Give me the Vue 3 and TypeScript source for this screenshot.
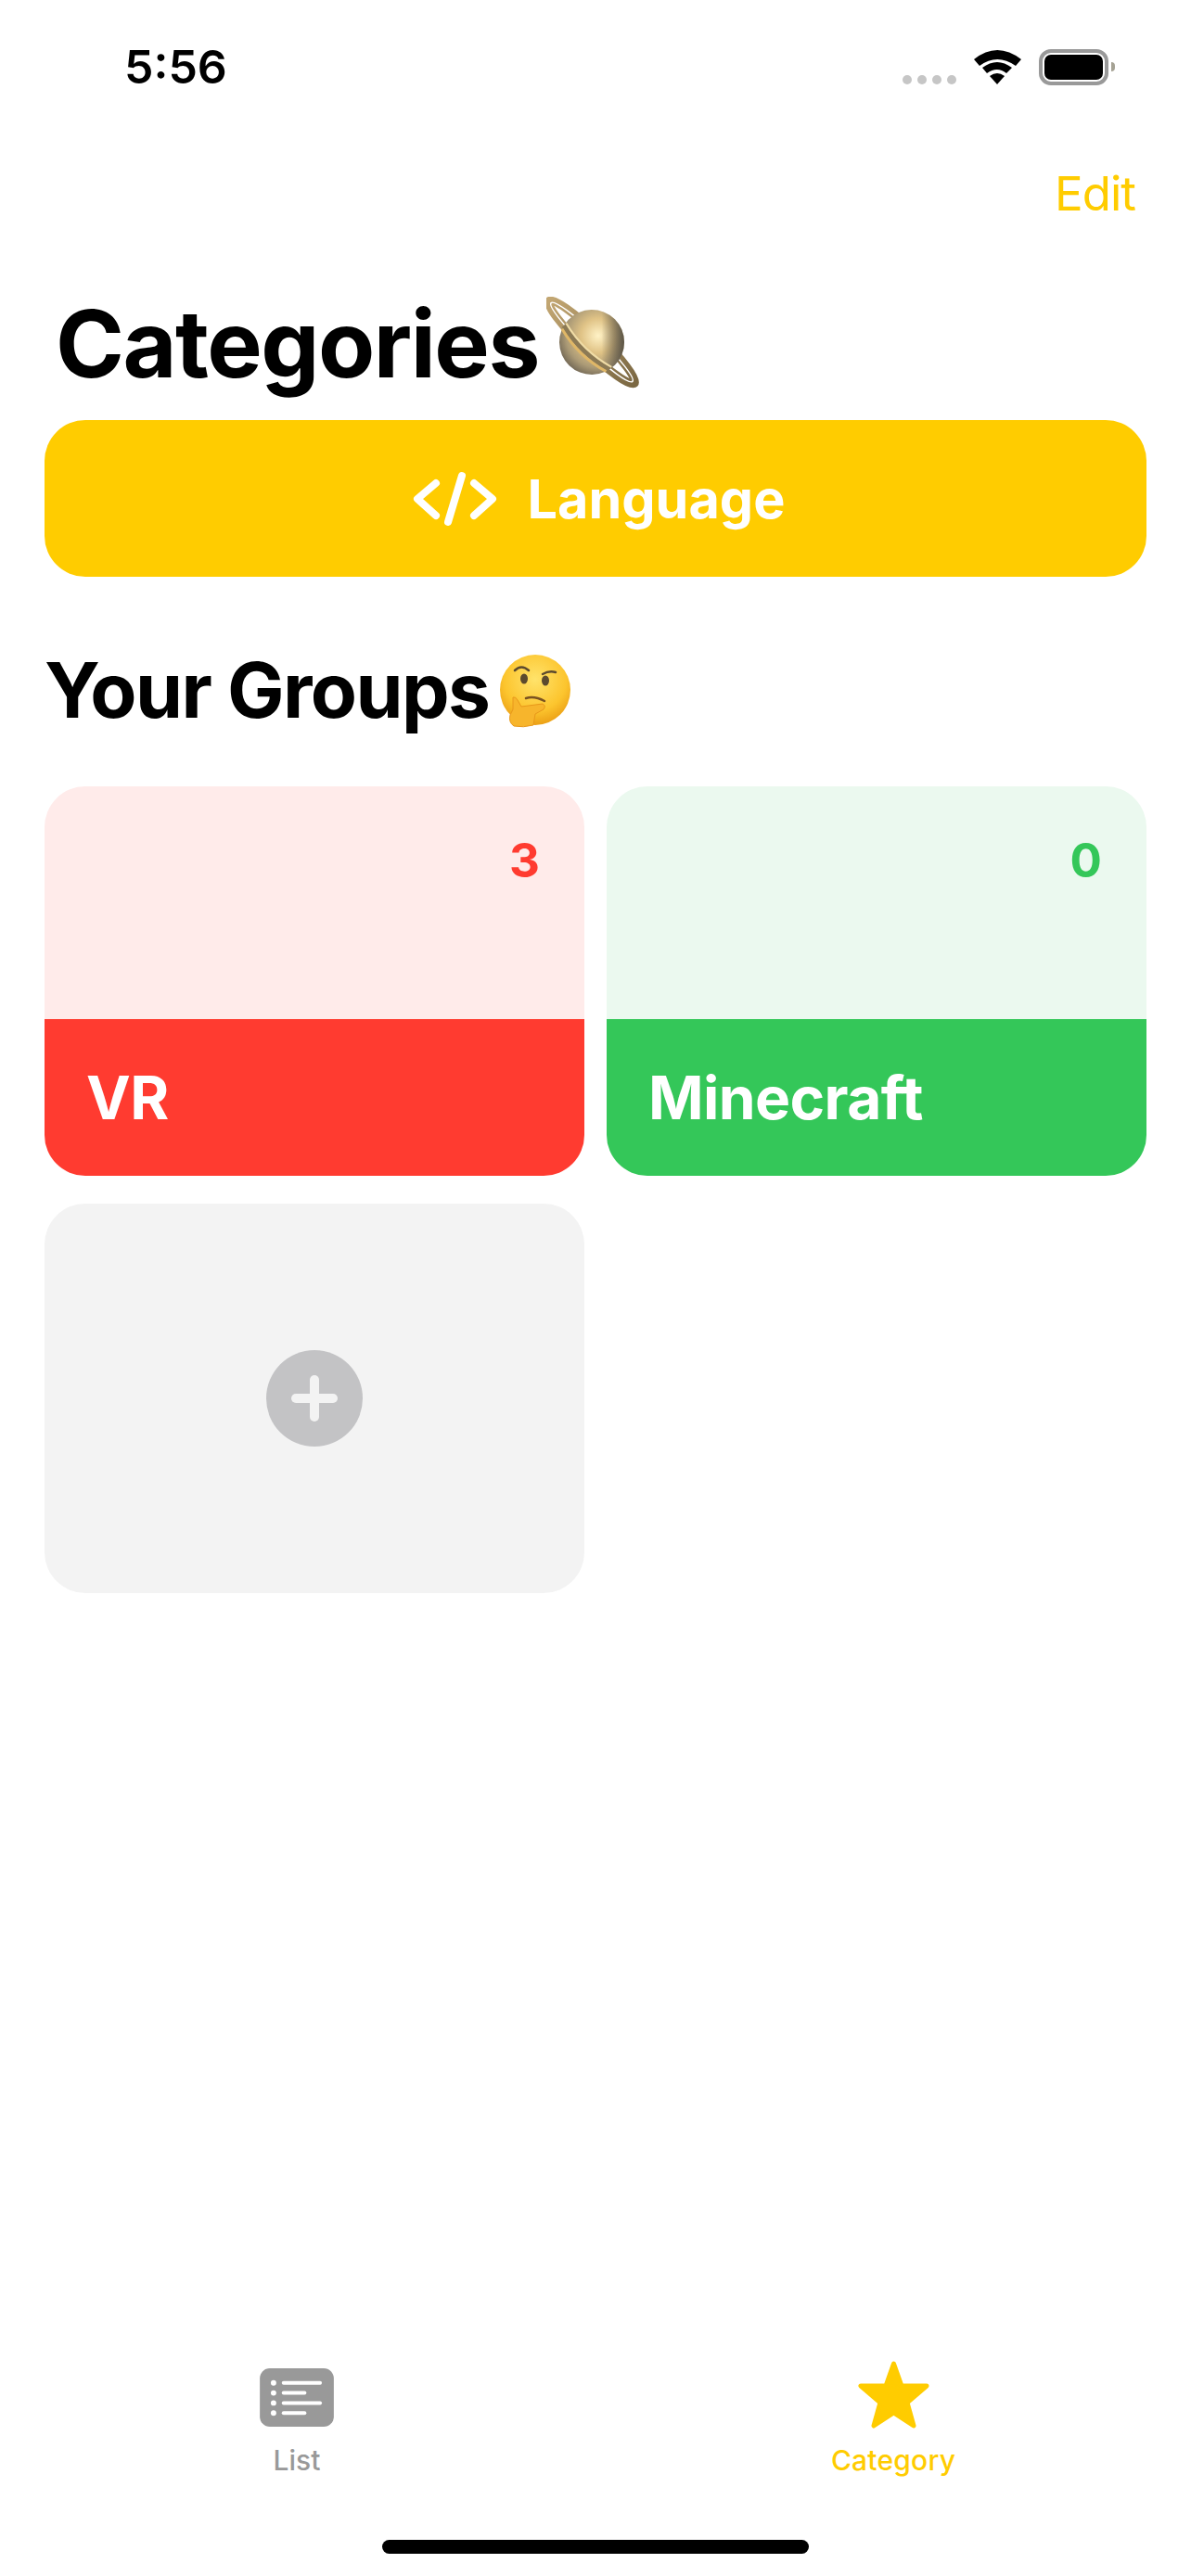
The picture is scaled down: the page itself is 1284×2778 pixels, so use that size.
<script setup lang="ts">
type Group = {
  id: string
  name: string
  count: number
  color: string
  tint: string
}

const groups: Group[] = [
  { id: 'vr', name: 'VR', count: 3, color: '#ff3b30', tint: '#ffebea' },
  { id: 'minecraft', name: 'Minecraft', count: 0, color: '#34c759', tint: '#ebf9ef' },
]

const listRows = [
  { y: 16, end: 68 },
  { y: 27, end: 51 },
  { y: 38, end: 68 },
  { y: 49, end: 51 },
]
</script>

<template>
  <main class="page">
    <header class="status">
      <span class="time">5:56</span>
      <div class="indicators">
        <div class="signal">
          <i v-for="n in 4" :key="n"></i>
        </div>
        <svg class="wifi" width="51" height="37" viewBox="0 0 51 37">
          <path d="M0 10 Q25 -10 51 10 L45 17 Q25 3 6 17 Z" />
          <path d="M9 19 Q25 7 41 19 L35 25 Q25 17 14 25 Z" />
          <path d="M17 28 Q25 22 33 28 L25 37 Z" />
        </svg>
        <div class="battery"><span></span></div>
      </div>
    </header>

    <nav class="nav"><span>Edit</span></nav>

    <div class="content">
      <div class="title-row">
        <h1>Categories</h1>
        <svg class="saturn" width="100" height="100" viewBox="0 0 100 100">
          <defs>
            <radialGradient id="planet" cx="0.5" cy="0.36" r="0.66">
              <stop offset="0" stop-color="#fff2c6" />
              <stop offset="0.4" stop-color="#e0c386" />
              <stop offset="0.75" stop-color="#ab9a76" />
              <stop offset="1" stop-color="#6f6554" />
            </radialGradient>
            <linearGradient id="ring" x1="0" y1="0" x2="1" y2="0">
              <stop offset="0" stop-color="#c2a672" />
              <stop offset="1" stop-color="#7b6843" />
            </linearGradient>
            <linearGradient id="shade" x1="0" y1="0.5" x2="1" y2="0.5">
              <stop offset="0.65" stop-color="#4f4a40" stop-opacity="0" />
              <stop offset="1" stop-color="#4f4a40" stop-opacity="0.9" />
            </linearGradient>
          </defs>
          <g transform="rotate(44 49 49)">
            <ellipse cx="49" cy="49" rx="64" ry="10" fill="none" stroke="url(#ring)" stroke-width="9" />
            <ellipse cx="49" cy="49" rx="61" ry="8.500" fill="none" stroke="#fff" stroke-width="1.500" />
          </g>
          <circle cx="49" cy="49" r="35" fill="url(#planet)" transform="rotate(44 49 49)" />
          <circle cx="49" cy="49" r="35" fill="url(#shade)" />
          <g transform="rotate(44 49 49)">
            <path d="M15 57 Q49 66 83 57" fill="none" stroke="#8c7a55" stroke-width="5" />
            <path d="M15 53.500 Q49 62.500 83 53.500" fill="none" stroke="#f0dca6" stroke-width="2" />
            <path d="M16 61 Q49 70 82 61" fill="none" stroke="#e0b767" stroke-width="3" />
          </g>
        </svg>
      </div>

      <button class="language" type="button">
        <svg width="96" height="66" viewBox="0 0 96 66" fill="none" stroke="#fff" stroke-width="8" stroke-linecap="round" stroke-linejoin="round">
          <path d="M28 16 L8 33 L28 51" />
          <path d="M56 8 L41 58" />
          <path d="M69 16 L89 33 L69 51" />
        </svg>
        <span>Language</span>
      </button>

      <div class="groups-head">
        <h2>Your Groups</h2>
        <svg class="thinking" width="76" height="80" viewBox="0 0 76 80">
          <defs>
            <radialGradient id="face" cx="0.5" cy="0.35" r="0.68">
              <stop offset="0" stop-color="#ffe36b" />
              <stop offset="0.65" stop-color="#fcc52e" />
              <stop offset="1" stop-color="#e99a12" />
            </radialGradient>
          </defs>
          <circle cx="38" cy="39" r="38" fill="url(#face)" />
          <ellipse cx="26" cy="27" rx="4" ry="5.500" fill="#5c4a2e" />
          <ellipse cx="49" cy="29" rx="4" ry="5.500" fill="#5c4a2e" />
          <path d="M16 18 Q23 11 31 18" fill="none" stroke="#5c4a2e" stroke-width="2.500" stroke-linecap="round" />
          <path d="M46 22 Q53 18 60 20" fill="none" stroke="#5c4a2e" stroke-width="2.500" stroke-linecap="round" />
          <path d="M28 48 Q37 45 48 51" fill="none" stroke="#7a5220" stroke-width="2.500" stroke-linecap="round" />
          <path d="M14 47 Q17 46 19 50 L23 57 L46 54 Q50 56 47 60 L38 65 L36 77 Q25 80 15 78 Q9 74 11 66 L14 60 Z" fill="#f7b52c" stroke="#e8981a" stroke-width="1" />
        </svg>
      </div>

      <section class="grid">
        <article v-for="group in groups" :key="group.id" class="card" :style="{ background: group.tint }">
          <div class="card-top" :style="{ color: group.color }">{{ group.count }}</div>
          <div class="card-bottom" :style="{ background: group.color }">{{ group.name }}</div>
        </article>
        <button class="add" type="button" aria-label="Add group">
          <span class="plus"></span>
        </button>
      </section>
    </div>

    <footer class="footer">
      <div class="tabs">
        <div class="tab list">
          <div class="tab-icon">
            <svg class="list-icon" width="80" height="63" viewBox="0 0 81 64">
              <rect width="81" height="64" rx="11" fill="#999" />
              <g v-for="row in listRows" :key="row.y" fill="#fff">
                <circle cx="15" :cy="row.y" r="3" />
                <rect x="24" :y="row.y - 2" :width="row.end - 24" height="4" rx="2" />
              </g>
            </svg>
          </div>
          <span class="tab-label">List</span>
        </div>
        <div class="tab active">
          <div class="tab-icon">
            <svg width="77" height="73" viewBox="0 0 77 73">
              <path d="M38.500 3 L47 27 L74 27 L53 45 L60 70 L38.500 56 L17 70 L24 45 L3 27 L30 27 Z" fill="#fc0" stroke="#fc0" stroke-width="5" stroke-linejoin="round" />
            </svg>
          </div>
          <span class="tab-label">Category</span>
        </div>
      </div>
      <div class="home-bar"></div>
    </footer>
  </main>
</template>

<style>
html,
body {
  margin: 0;
  background: #fff;
}
</style>

<style scoped>
.page {
  display: flex;
  flex-direction: column;
  height: 2778px;
  font-family: Inter, 'Liberation Sans', sans-serif;
  color: #000;
  background: #fff;
}

.status {
  display: flex;
  align-items: center;
  justify-content: space-between;
  height: 144px;
  padding: 0 89px 0 134px;
  box-sizing: border-box;
}

.time {
  font-size: 50px;
  font-weight: 600;
  line-height: 1;
}

.indicators {
  display: flex;
  align-items: flex-end;
  height: 39px;
}

.signal {
  display: flex;
  gap: 6px;
  margin: 0 19px 1px 0;
}

.signal i {
  width: 10px;
  height: 10px;
  border-radius: 50%;
  background: #c6c6c6;
}

.wifi {
  margin: 0 19px 1px 0;
  fill: #000;
}

.battery {
  position: relative;
  width: 75px;
  height: 39px;
  padding: 2px;
  box-sizing: border-box;
  border: 4px solid #999;
  border-radius: 13px;
}

.battery span {
  display: block;
  height: 100%;
  border-radius: 7px;
  background: #000;
}

.battery::after {
  content: '';
  position: absolute;
  top: 10px;
  right: -11px;
  width: 4px;
  height: 10px;
  border-radius: 0 4px 4px 0;
  background: #a5a294;
}

.nav {
  display: flex;
  align-items: center;
  justify-content: flex-end;
  height: 128px;
  padding-right: 60px;
  font-size: 51px;
  letter-spacing: -1px;
  color: #fc0;
}

.content {
  padding: 0 48px;
}

.title-row {
  display: flex;
  align-items: center;
  height: 165px;
  padding: 16px 0 0 12px;
}

h1 {
  margin: 0;
  font-size: 100px;
  font-weight: 700;
  line-height: 1;
  letter-spacing: -1.5px;
}

.saturn {
  margin: -2px 0 0 8px;
}

.language {
  display: flex;
  align-items: center;
  justify-content: center;
  gap: 31px;
  width: 100%;
  height: 169px;
  padding: 0 0 0 4px;
  border: none;
  border-radius: 44px;
  background: #fc0;
  color: #fff;
  font-family: inherit;
  font-size: 57.500px;
  font-weight: 700;
}

.groups-head {
  display: flex;
  align-items: center;
  height: 226px;
  padding-top: 19px;
  box-sizing: border-box;
}

h2 {
  margin: 0;
  font-size: 82px;
  font-weight: 700;
  line-height: 1;
  letter-spacing: -1.6px;
}

.thinking {
  margin-left: 12px;
}

.grid {
  display: grid;
  grid-template-columns: 1fr 1fr;
  gap: 30px 24px;
}

.card {
  height: 420px;
  overflow: hidden;
  border-radius: 44px;
}

.card-top {
  height: 251px;
  padding: 54px 48px 0 0;
  box-sizing: border-box;
  font-size: 51px;
  font-weight: 700;
  line-height: 52px;
  text-align: right;
}

.card-bottom {
  display: flex;
  align-items: center;
  height: 169px;
  padding-left: 45px;
  color: #fff;
  font-size: 64px;
  font-weight: 700;
  letter-spacing: -0.6px;
}

.add {
  display: flex;
  align-items: center;
  justify-content: center;
  height: 420px;
  padding: 0;
  border: none;
  border-radius: 44px;
  background: #f3f3f3;
}

.plus {
  position: relative;
  width: 104px;
  height: 104px;
  border-radius: 50%;
  background: #c3c3c5;
}

.plus::before,
.plus::after {
  content: '';
  position: absolute;
  border-radius: 5px;
  background: #f3f3f3;
}

.plus::before {
  top: 47px;
  left: 27px;
  width: 50px;
  height: 10px;
}

.plus::after {
  top: 27px;
  left: 47px;
  width: 10px;
  height: 50px;
}

.footer {
  margin-top: auto;
}

.tabs {
  display: grid;
  grid-template-columns: 1fr 1fr;
}

.tab {
  display: flex;
  flex-direction: column;
  align-items: center;
  color: #999;
}

.tab.list {
  padding-right: 2px;
}

.tab.active {
  color: #fc0;
  letter-spacing: 0.2px;
}

.tab-icon {
  display: flex;
  align-items: center;
  justify-content: center;
  height: 73px;
}

.list-icon {
  margin-top: 6px;
}

.tab-label {
  margin-top: 16px;
  font-size: 30px;
  font-weight: 500;
  line-height: 36px;
}

.home-bar {
  width: 460px;
  height: 15px;
  margin: 68px auto 24px;
  border-radius: 8px;
  background: #000;
}
</style>
